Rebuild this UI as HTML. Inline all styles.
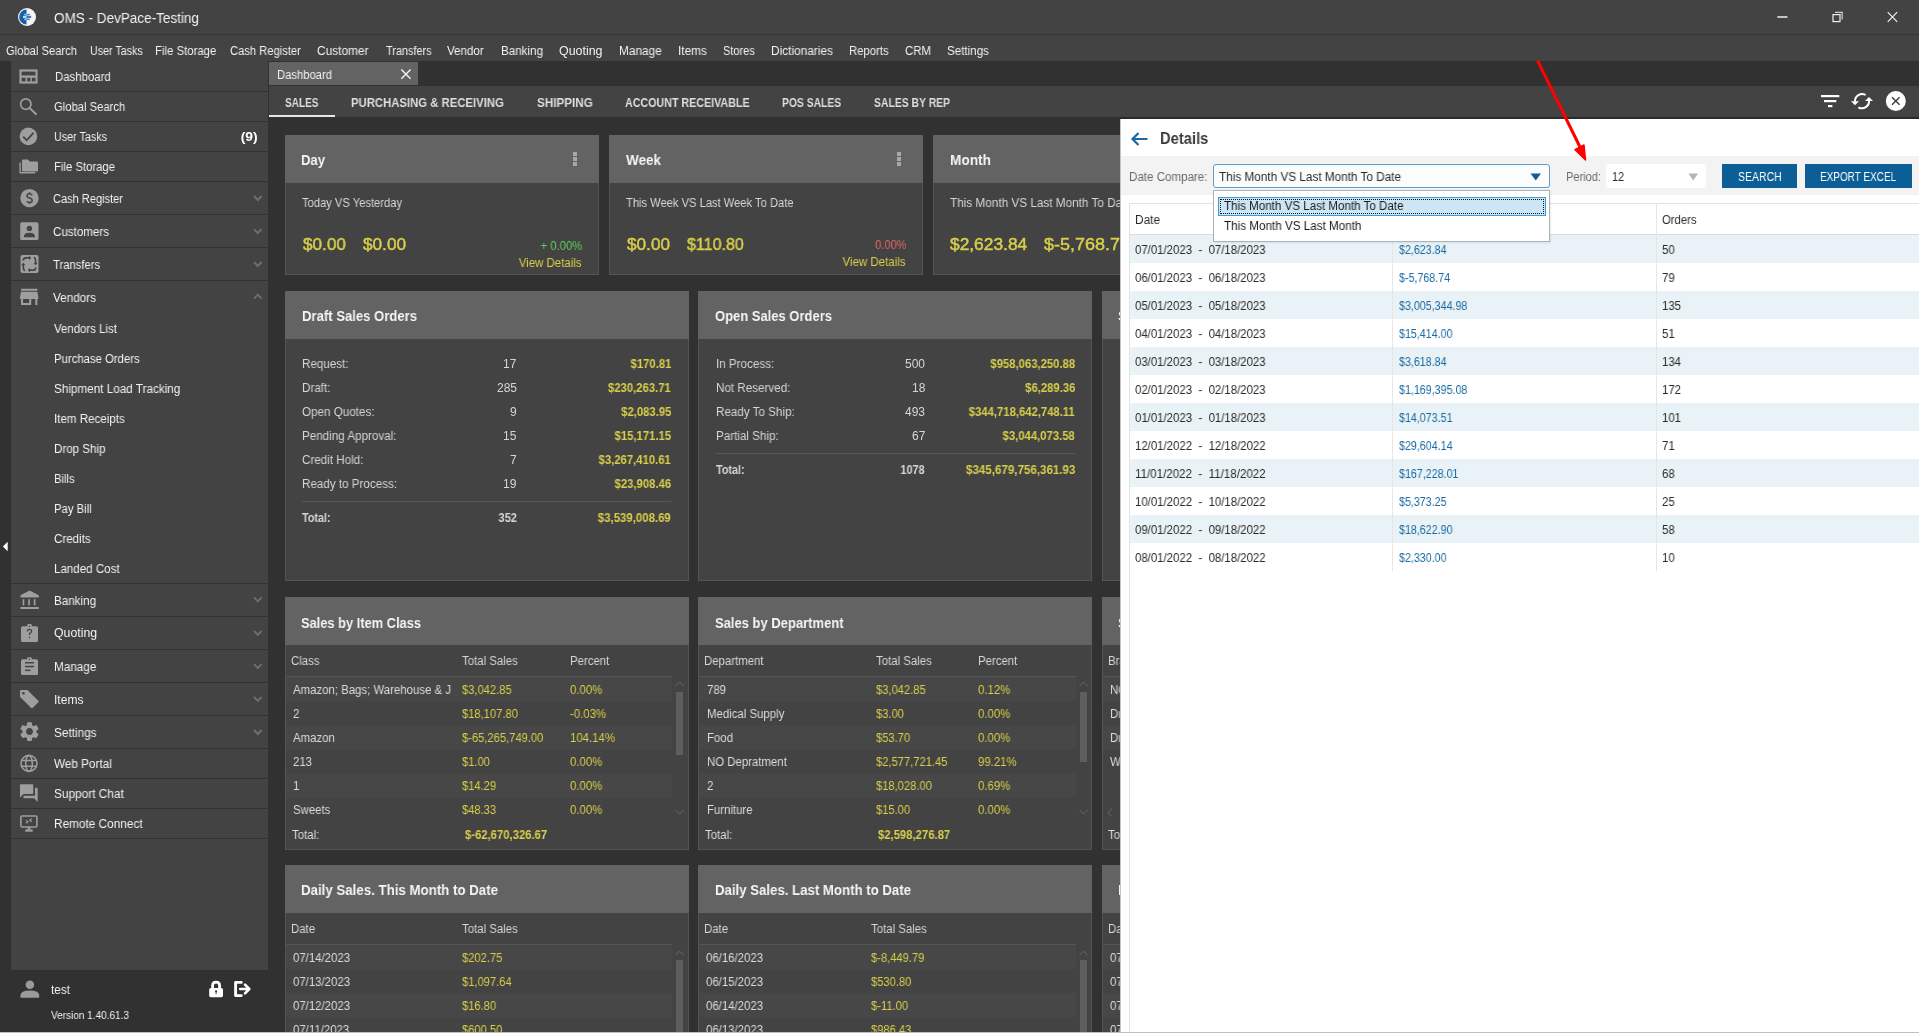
<!DOCTYPE html>
<html><head><meta charset="utf-8"><title>OMS - DevPace-Testing</title>
<style>
html,body{margin:0;padding:0;width:1919px;height:1033px;overflow:hidden;background:#313131;}
body{position:relative;font-family:'Liberation Sans', sans-serif;}
div,span,svg{position:absolute;}
.t{white-space:pre;line-height:20px;will-change:transform;}
</style></head><body>
<div style="left:0px;top:0px;width:1919px;height:34px;background:#434343;"></div>
<div style="left:0px;top:34px;width:1919px;height:1px;background:#363636;"></div>
<div style="left:0px;top:35px;width:1919px;height:26px;background:#434343;"></div>
<span class="t" style="left:54.00px;top:8.15px;font-size:14px;color:#f2f2f2;transform:scaleX(0.9656);transform-origin:left center;">OMS - DevPace-Testing</span>
<span class="t" style="left:6.30px;top:40.84px;font-size:12px;color:#f2f2f2;transform:scaleX(0.9349);transform-origin:left center;">Global Search</span>
<span class="t" style="left:90.20px;top:40.84px;font-size:12px;color:#f2f2f2;transform:scaleX(0.8894);transform-origin:left center;">User Tasks</span>
<span class="t" style="left:155.00px;top:40.84px;font-size:12px;color:#f2f2f2;transform:scaleX(0.9474);transform-origin:left center;">File Storage</span>
<span class="t" style="left:230.30px;top:40.84px;font-size:12px;color:#f2f2f2;transform:scaleX(0.9325);transform-origin:left center;">Cash Register</span>
<span class="t" style="left:317.40px;top:40.84px;font-size:12px;color:#f2f2f2;transform:scaleX(0.9901);transform-origin:left center;">Customer</span>
<span class="t" style="left:385.60px;top:40.84px;font-size:12px;color:#f2f2f2;transform:scaleX(0.9077);transform-origin:left center;">Transfers</span>
<span class="t" style="left:447.10px;top:40.84px;font-size:12px;color:#f2f2f2;transform:scaleX(0.9646);transform-origin:left center;">Vendor</span>
<span class="t" style="left:500.50px;top:40.84px;font-size:12px;color:#f2f2f2;transform:scaleX(0.9683);transform-origin:left center;">Banking</span>
<span class="t" style="left:558.90px;top:40.84px;font-size:12px;color:#f2f2f2;transform:scaleX(1.0349);transform-origin:left center;">Quoting</span>
<span class="t" style="left:619.30px;top:40.84px;font-size:12px;color:#f2f2f2;transform:scaleX(0.9844);transform-origin:left center;">Manage</span>
<span class="t" style="left:678.20px;top:40.84px;font-size:12px;color:#f2f2f2;transform:scaleX(0.9849);transform-origin:left center;">Items</span>
<span class="t" style="left:723.00px;top:40.84px;font-size:12px;color:#f2f2f2;transform:scaleX(0.9168);transform-origin:left center;">Stores</span>
<span class="t" style="left:771.00px;top:40.84px;font-size:12px;color:#f2f2f2;transform:scaleX(0.9888);transform-origin:left center;">Dictionaries</span>
<span class="t" style="left:849.10px;top:40.84px;font-size:12px;color:#f2f2f2;transform:scaleX(0.9422);transform-origin:left center;">Reports</span>
<span class="t" style="left:905.20px;top:40.84px;font-size:12px;color:#f2f2f2;transform:scaleX(0.9514);transform-origin:left center;">CRM</span>
<span class="t" style="left:947.10px;top:40.84px;font-size:12px;color:#f2f2f2;transform:scaleX(0.9663);transform-origin:left center;">Settings</span>
<div style="left:0px;top:61px;width:11px;height:972px;background:#313131;"></div>
<div style="left:11px;top:61px;width:257px;height:909px;background:#434343;"></div>
<div style="left:11px;top:91px;width:257px;height:1px;background:#313131;"></div>
<div style="left:11px;top:121px;width:257px;height:1px;background:#313131;"></div>
<div style="left:11px;top:151px;width:257px;height:1px;background:#313131;"></div>
<div style="left:11px;top:181px;width:257px;height:1px;background:#313131;"></div>
<div style="left:11px;top:214px;width:257px;height:1px;background:#313131;"></div>
<div style="left:11px;top:247px;width:257px;height:1px;background:#313131;"></div>
<div style="left:11px;top:280px;width:257px;height:1px;background:#313131;"></div>
<div style="left:11px;top:583px;width:257px;height:1px;background:#313131;"></div>
<div style="left:11px;top:616px;width:257px;height:1px;background:#313131;"></div>
<div style="left:11px;top:649px;width:257px;height:1px;background:#313131;"></div>
<div style="left:11px;top:682px;width:257px;height:1px;background:#313131;"></div>
<div style="left:11px;top:715px;width:257px;height:1px;background:#313131;"></div>
<div style="left:11px;top:748px;width:257px;height:1px;background:#313131;"></div>
<div style="left:11px;top:778px;width:257px;height:1px;background:#313131;"></div>
<div style="left:11px;top:808px;width:257px;height:1px;background:#313131;"></div>
<div style="left:11px;top:838px;width:257px;height:1px;background:#313131;"></div>
<span class="t" style="left:54.60px;top:66.84px;font-size:12px;color:#f2f2f2;transform:scaleX(0.9503);transform-origin:left center;">Dashboard</span>
<span class="t" style="left:54.10px;top:97.44px;font-size:12px;color:#f2f2f2;transform:scaleX(0.9376);transform-origin:left center;">Global Search</span>
<span class="t" style="left:54.10px;top:126.94px;font-size:12px;color:#f2f2f2;transform:scaleX(0.8945);transform-origin:left center;">User Tasks</span>
<span class="t" style="left:54.10px;top:157.14px;font-size:12px;color:#f2f2f2;transform:scaleX(0.9428);transform-origin:left center;">File Storage</span>
<span class="t" style="left:52.90px;top:188.84px;font-size:12px;color:#f2f2f2;transform:scaleX(0.9207);transform-origin:left center;">Cash Register</span>
<span class="t" style="left:52.90px;top:222.14px;font-size:12px;color:#f2f2f2;transform:scaleX(0.9670);transform-origin:left center;">Customers</span>
<span class="t" style="left:52.90px;top:255.34px;font-size:12px;color:#f2f2f2;transform:scaleX(0.9376);transform-origin:left center;">Transfers</span>
<span class="t" style="left:52.90px;top:288.04px;font-size:12px;color:#f2f2f2;transform:scaleX(0.9785);transform-origin:left center;">Vendors</span>
<span class="t" style="left:242.73px;top:126.94px;font-size:12px;color:#ffffff;font-weight:700;transform:scaleX(1.1587);transform-origin:right center;">(9)</span>
<span class="t" style="left:54.20px;top:319.44px;font-size:12px;color:#f2f2f2;transform:scaleX(0.9524);transform-origin:left center;">Vendors List</span>
<span class="t" style="left:54.20px;top:349.24px;font-size:12px;color:#f2f2f2;transform:scaleX(0.9448);transform-origin:left center;">Purchase Orders</span>
<span class="t" style="left:54.20px;top:379.04px;font-size:12px;color:#f2f2f2;transform:scaleX(0.9759);transform-origin:left center;">Shipment Load Tracking</span>
<span class="t" style="left:54.20px;top:408.84px;font-size:12px;color:#f2f2f2;transform:scaleX(0.9651);transform-origin:left center;">Item Receipts</span>
<span class="t" style="left:54.20px;top:438.84px;font-size:12px;color:#f2f2f2;transform:scaleX(0.9649);transform-origin:left center;">Drop Ship</span>
<span class="t" style="left:54.20px;top:468.84px;font-size:12px;color:#f2f2f2;transform:scaleX(0.9357);transform-origin:left center;">Bills</span>
<span class="t" style="left:54.20px;top:498.84px;font-size:12px;color:#f2f2f2;transform:scaleX(0.9421);transform-origin:left center;">Pay Bill</span>
<span class="t" style="left:54.20px;top:528.84px;font-size:12px;color:#f2f2f2;transform:scaleX(0.9628);transform-origin:left center;">Credits</span>
<span class="t" style="left:54.20px;top:558.84px;font-size:12px;color:#f2f2f2;transform:scaleX(0.9638);transform-origin:left center;">Landed Cost</span>
<span class="t" style="left:53.60px;top:590.64px;font-size:12px;color:#f2f2f2;transform:scaleX(0.9706);transform-origin:left center;">Banking</span>
<span class="t" style="left:53.60px;top:623.34px;font-size:12px;color:#f2f2f2;transform:scaleX(1.0254);transform-origin:left center;">Quoting</span>
<span class="t" style="left:53.60px;top:656.84px;font-size:12px;color:#f2f2f2;transform:scaleX(0.9775);transform-origin:left center;">Manage</span>
<span class="t" style="left:53.60px;top:689.54px;font-size:12px;color:#f2f2f2;transform:scaleX(1.0053);transform-origin:left center;">Items</span>
<span class="t" style="left:53.60px;top:722.74px;font-size:12px;color:#f2f2f2;transform:scaleX(0.9825);transform-origin:left center;">Settings</span>
<span class="t" style="left:54.10px;top:754.04px;font-size:12px;color:#f2f2f2;transform:scaleX(0.9773);transform-origin:left center;">Web Portal</span>
<span class="t" style="left:54.10px;top:784.14px;font-size:12px;color:#f2f2f2;transform:scaleX(0.9870);transform-origin:left center;">Support Chat</span>
<span class="t" style="left:54.10px;top:814.24px;font-size:12px;color:#f2f2f2;transform:scaleX(0.9839);transform-origin:left center;">Remote Connect</span>
<span class="t" style="left:51.00px;top:979.84px;font-size:12px;color:#f2f2f2;transform:scaleX(0.9822);transform-origin:left center;">test</span>
<span class="t" style="left:51.00px;top:1005.19px;font-size:11px;color:#f2f2f2;transform:scaleX(0.9109);transform-origin:left center;">Version 1.40.61.3</span>
<div style="left:268px;top:61px;width:1651px;height:25px;background:#313131;"></div>
<div style="left:269px;top:62px;width:149px;height:23px;background:#636363;"></div>
<span class="t" style="left:277.40px;top:64.84px;font-size:12px;color:#f2f2f2;transform:scaleX(0.9367);transform-origin:left center;">Dashboard</span>
<div style="left:269px;top:86px;width:1650px;height:31px;background:#434343;"></div>
<div style="left:269px;top:115px;width:66px;height:2px;background:#e6e6e6;"></div>
<span class="t" style="left:285.00px;top:93.14px;font-size:12px;color:#dedede;font-weight:700;transform:scaleX(0.8347);transform-origin:left center;">SALES</span>
<span class="t" style="left:351.20px;top:93.14px;font-size:12px;color:#dedede;font-weight:700;transform:scaleX(0.9430);transform-origin:left center;">PURCHASING &amp; RECEIVING</span>
<span class="t" style="left:536.70px;top:93.14px;font-size:12px;color:#dedede;font-weight:700;transform:scaleX(0.9728);transform-origin:left center;">SHIPPING</span>
<span class="t" style="left:625.00px;top:93.14px;font-size:12px;color:#dedede;font-weight:700;transform:scaleX(0.8914);transform-origin:left center;">ACCOUNT RECEIVABLE</span>
<span class="t" style="left:782.20px;top:93.14px;font-size:12px;color:#dedede;font-weight:700;transform:scaleX(0.8604);transform-origin:left center;">POS SALES</span>
<span class="t" style="left:873.90px;top:93.14px;font-size:12px;color:#dedede;font-weight:700;transform:scaleX(0.8666);transform-origin:left center;">SALES BY REP</span>
<div style="left:285px;top:135px;width:314px;height:48px;background:#636363;"></div>
<div style="left:285px;top:183px;width:314px;height:92px;background:#434343;box-shadow:inset 1px 0 0 #545454,inset -1px 0 0 #545454,inset 0 -1px 0 #545454;"></div>
<div style="left:609px;top:135px;width:314px;height:48px;background:#636363;"></div>
<div style="left:609px;top:183px;width:314px;height:92px;background:#434343;box-shadow:inset 1px 0 0 #545454,inset -1px 0 0 #545454,inset 0 -1px 0 #545454;"></div>
<div style="left:933px;top:135px;width:314px;height:48px;background:#636363;"></div>
<div style="left:933px;top:183px;width:314px;height:92px;background:#434343;box-shadow:inset 1px 0 0 #545454,inset -1px 0 0 #545454,inset 0 -1px 0 #545454;"></div>
<div style="left:573px;top:152px;width:4px;height:4px;background:#a8a8a8;"></div>
<div style="left:573px;top:157px;width:4px;height:4px;background:#a8a8a8;"></div>
<div style="left:573px;top:162px;width:4px;height:4px;background:#a8a8a8;"></div>
<div style="left:897px;top:152px;width:4px;height:4px;background:#a8a8a8;"></div>
<div style="left:897px;top:157px;width:4px;height:4px;background:#a8a8a8;"></div>
<div style="left:897px;top:162px;width:4px;height:4px;background:#a8a8a8;"></div>
<span class="t" style="left:301.40px;top:150.30px;font-size:15px;color:#f5f5f5;font-weight:700;transform:scaleX(0.8717);transform-origin:left center;">Day</span>
<span class="t" style="left:625.50px;top:150.30px;font-size:15px;color:#f5f5f5;font-weight:700;transform:scaleX(0.8992);transform-origin:left center;">Week</span>
<span class="t" style="left:949.60px;top:150.30px;font-size:15px;color:#f5f5f5;font-weight:700;transform:scaleX(0.9114);transform-origin:left center;">Month</span>
<span class="t" style="left:302.00px;top:192.67px;font-size:12.5px;color:#d6d6d6;transform:scaleX(0.8937);transform-origin:left center;">Today VS Yesterday</span>
<span class="t" style="left:626.00px;top:192.67px;font-size:12.5px;color:#d6d6d6;transform:scaleX(0.8929);transform-origin:left center;">This Week VS Last Week To Date</span>
<span class="t" style="left:950.00px;top:192.67px;font-size:12.5px;color:#d6d6d6;transform:scaleX(0.9400);transform-origin:left center;">This Month VS Last Month To Date</span>
<span class="t" style="left:302.80px;top:234.34px;font-size:17.2px;color:#d8cf4a;-webkit-text-stroke:0.45px #d8cf4a;transform:scaleX(0.9950);transform-origin:left center;">$0.00</span>
<span class="t" style="left:362.50px;top:234.34px;font-size:17.2px;color:#d8cf4a;-webkit-text-stroke:0.45px #d8cf4a;">$0.00</span>
<span class="t" style="left:626.70px;top:234.04px;font-size:17.2px;color:#d8cf4a;-webkit-text-stroke:0.45px #d8cf4a;transform:scaleX(0.9973);transform-origin:left center;">$0.00</span>
<span class="t" style="left:686.80px;top:234.04px;font-size:17.2px;color:#d8cf4a;-webkit-text-stroke:0.45px #d8cf4a;transform:scaleX(0.9333);transform-origin:left center;">$110.80</span>
<span class="t" style="left:950.30px;top:234.04px;font-size:17.2px;color:#d8cf4a;-webkit-text-stroke:0.45px #d8cf4a;transform:scaleX(1.0096);transform-origin:left center;">$2,623.84</span>
<span class="t" style="left:1044.30px;top:234.04px;font-size:17.2px;color:#d8cf4a;-webkit-text-stroke:0.45px #d8cf4a;transform:scaleX(1.0464);transform-origin:left center;">$-5,768.74</span>
<span class="t" style="left:535.78px;top:235.67px;font-size:12.5px;color:#5ccf5c;transform:scaleX(0.9001);transform-origin:right center;">+ 0.00%</span>
<span class="t" style="left:870.55px;top:235.17px;font-size:12.5px;color:#e06666;transform:scaleX(0.8829);transform-origin:right center;">0.00%</span>
<span class="t" style="left:513.44px;top:252.67px;font-size:12.5px;color:#d8cf4a;transform:scaleX(0.9160);transform-origin:right center;">View Details</span>
<span class="t" style="left:837.44px;top:252.17px;font-size:12.5px;color:#d8cf4a;transform:scaleX(0.9189);transform-origin:right center;">View Details</span>
<div style="left:285px;top:291px;width:404px;height:48px;background:#636363;"></div>
<div style="left:285px;top:339px;width:404px;height:242px;background:#434343;box-shadow:inset 1px 0 0 #545454,inset -1px 0 0 #545454,inset 0 -1px 0 #545454;"></div>
<div style="left:698px;top:291px;width:394px;height:48px;background:#636363;"></div>
<div style="left:698px;top:339px;width:394px;height:242px;background:#434343;box-shadow:inset 1px 0 0 #545454,inset -1px 0 0 #545454,inset 0 -1px 0 #545454;"></div>
<div style="left:1102px;top:291px;width:400px;height:48px;background:#636363;"></div>
<div style="left:1102px;top:339px;width:400px;height:242px;background:#434343;box-shadow:inset 1px 0 0 #545454,inset -1px 0 0 #545454,inset 0 -1px 0 #545454;"></div>
<span class="t" style="left:301.50px;top:306.20px;font-size:15px;color:#f5f5f5;font-weight:700;transform:scaleX(0.8730);transform-origin:left center;">Draft Sales Orders</span>
<span class="t" style="left:714.50px;top:306.20px;font-size:15px;color:#f5f5f5;font-weight:700;transform:scaleX(0.8663);transform-origin:left center;">Open Sales Orders</span>
<span class="t" style="left:1118.00px;top:306.20px;font-size:15px;color:#f5f5f5;font-weight:700;transform:scaleX(0.9500);transform-origin:left center;">S</span>
<span class="t" style="left:302.00px;top:354.34px;font-size:12px;color:#d6d6d6;transform:scaleX(0.9700);transform-origin:left center;">Request:</span>
<span class="t" style="left:503.24px;top:354.34px;font-size:12px;color:#d6d6d6;">17</span>
<span class="t" style="left:627.61px;top:354.34px;font-size:12px;color:#d8cf4a;font-weight:700;transform:scaleX(0.9400);transform-origin:right center;">$170.81</span>
<span class="t" style="left:302.00px;top:378.34px;font-size:12px;color:#d6d6d6;transform:scaleX(0.9700);transform-origin:left center;">Draft:</span>
<span class="t" style="left:496.57px;top:378.34px;font-size:12px;color:#d6d6d6;">285</span>
<span class="t" style="left:604.27px;top:378.34px;font-size:12px;color:#d8cf4a;font-weight:700;transform:scaleX(0.9400);transform-origin:right center;">$230,263.71</span>
<span class="t" style="left:302.00px;top:402.34px;font-size:12px;color:#d6d6d6;transform:scaleX(0.9700);transform-origin:left center;">Open Quotes:</span>
<span class="t" style="left:509.91px;top:402.34px;font-size:12px;color:#d6d6d6;">9</span>
<span class="t" style="left:617.61px;top:402.34px;font-size:12px;color:#d8cf4a;font-weight:700;transform:scaleX(0.9400);transform-origin:right center;">$2,083.95</span>
<span class="t" style="left:302.00px;top:426.34px;font-size:12px;color:#d6d6d6;transform:scaleX(0.9700);transform-origin:left center;">Pending Approval:</span>
<span class="t" style="left:503.24px;top:426.34px;font-size:12px;color:#d6d6d6;">15</span>
<span class="t" style="left:610.94px;top:426.34px;font-size:12px;color:#d8cf4a;font-weight:700;transform:scaleX(0.9400);transform-origin:right center;">$15,171.15</span>
<span class="t" style="left:302.00px;top:450.34px;font-size:12px;color:#d6d6d6;transform:scaleX(0.9700);transform-origin:left center;">Credit Hold:</span>
<span class="t" style="left:509.91px;top:450.34px;font-size:12px;color:#d6d6d6;">7</span>
<span class="t" style="left:594.25px;top:450.34px;font-size:12px;color:#d8cf4a;font-weight:700;transform:scaleX(0.9400);transform-origin:right center;">$3,267,410.61</span>
<span class="t" style="left:302.00px;top:474.34px;font-size:12px;color:#d6d6d6;transform:scaleX(0.9700);transform-origin:left center;">Ready to Process:</span>
<span class="t" style="left:503.24px;top:474.34px;font-size:12px;color:#d6d6d6;">19</span>
<span class="t" style="left:610.94px;top:474.34px;font-size:12px;color:#d8cf4a;font-weight:700;transform:scaleX(0.9400);transform-origin:right center;">$23,908.46</span>
<div style="left:302px;top:501px;width:369px;height:1px;background:#575757;"></div>
<span class="t" style="left:302.00px;top:508.24px;font-size:12px;color:#d6d6d6;font-weight:700;transform:scaleX(0.9000);transform-origin:left center;">Total:</span>
<span class="t" style="left:496.57px;top:508.24px;font-size:12px;color:#d6d6d6;font-weight:700;transform:scaleX(0.9300);transform-origin:right center;">352</span>
<span class="t" style="left:594.25px;top:508.24px;font-size:12px;color:#d8cf4a;font-weight:700;transform:scaleX(0.9500);transform-origin:right center;">$3,539,008.69</span>
<span class="t" style="left:715.50px;top:354.34px;font-size:12px;color:#d6d6d6;transform:scaleX(0.9700);transform-origin:left center;">In Process:</span>
<span class="t" style="left:904.97px;top:354.34px;font-size:12px;color:#d6d6d6;">500</span>
<span class="t" style="left:984.91px;top:354.34px;font-size:12px;color:#d8cf4a;font-weight:700;transform:scaleX(0.9400);transform-origin:right center;">$958,063,250.88</span>
<span class="t" style="left:715.50px;top:378.34px;font-size:12px;color:#d6d6d6;transform:scaleX(0.9700);transform-origin:left center;">Not Reserved:</span>
<span class="t" style="left:911.64px;top:378.34px;font-size:12px;color:#d6d6d6;">18</span>
<span class="t" style="left:1021.61px;top:378.34px;font-size:12px;color:#d8cf4a;font-weight:700;transform:scaleX(0.9400);transform-origin:right center;">$6,289.36</span>
<span class="t" style="left:715.50px;top:402.34px;font-size:12px;color:#d6d6d6;transform:scaleX(0.9700);transform-origin:left center;">Ready To Ship:</span>
<span class="t" style="left:904.97px;top:402.34px;font-size:12px;color:#d6d6d6;">493</span>
<span class="t" style="left:962.22px;top:402.34px;font-size:12px;color:#d8cf4a;font-weight:700;transform:scaleX(0.9400);transform-origin:right center;">$344,718,642,748.11</span>
<span class="t" style="left:715.50px;top:426.34px;font-size:12px;color:#d6d6d6;transform:scaleX(0.9700);transform-origin:left center;">Partial Ship:</span>
<span class="t" style="left:911.64px;top:426.34px;font-size:12px;color:#d6d6d6;">67</span>
<span class="t" style="left:998.25px;top:426.34px;font-size:12px;color:#d8cf4a;font-weight:700;transform:scaleX(0.9400);transform-origin:right center;">$3,044,073.58</span>
<div style="left:715px;top:453px;width:360px;height:1px;background:#575757;"></div>
<span class="t" style="left:715.50px;top:460.34px;font-size:12px;color:#d6d6d6;font-weight:700;transform:scaleX(0.9000);transform-origin:left center;">Total:</span>
<span class="t" style="left:898.30px;top:460.34px;font-size:12px;color:#d6d6d6;font-weight:700;transform:scaleX(0.9100);transform-origin:right center;">1078</span>
<span class="t" style="left:961.55px;top:460.34px;font-size:12px;color:#d8cf4a;font-weight:700;transform:scaleX(0.9650);transform-origin:right center;">$345,679,756,361.93</span>
<div style="left:285px;top:597px;width:404px;height:48px;background:#636363;"></div>
<div style="left:285px;top:645px;width:404px;height:205px;background:#434343;box-shadow:inset 1px 0 0 #545454,inset -1px 0 0 #545454,inset 0 -1px 0 #545454;"></div>
<div style="left:698px;top:597px;width:394px;height:48px;background:#636363;"></div>
<div style="left:698px;top:645px;width:394px;height:205px;background:#434343;box-shadow:inset 1px 0 0 #545454,inset -1px 0 0 #545454,inset 0 -1px 0 #545454;"></div>
<div style="left:1102px;top:597px;width:400px;height:48px;background:#636363;"></div>
<div style="left:1102px;top:645px;width:400px;height:205px;background:#434343;box-shadow:inset 1px 0 0 #545454,inset -1px 0 0 #545454,inset 0 -1px 0 #545454;"></div>
<span class="t" style="left:301.00px;top:612.80px;font-size:15px;color:#f5f5f5;font-weight:700;transform:scaleX(0.8567);transform-origin:left center;">Sales by Item Class</span>
<span class="t" style="left:714.50px;top:612.80px;font-size:15px;color:#f5f5f5;font-weight:700;transform:scaleX(0.8660);transform-origin:left center;">Sales by Department</span>
<span class="t" style="left:1118.00px;top:612.80px;font-size:15px;color:#f5f5f5;font-weight:700;transform:scaleX(0.9500);transform-origin:left center;">S</span>
<span class="t" style="left:291.00px;top:651.34px;font-size:12px;color:#d6d6d6;transform:scaleX(0.9500);transform-origin:left center;">Class</span>
<span class="t" style="left:462.00px;top:651.34px;font-size:12px;color:#d6d6d6;transform:scaleX(0.9500);transform-origin:left center;">Total Sales</span>
<span class="t" style="left:570.00px;top:651.34px;font-size:12px;color:#d6d6d6;transform:scaleX(0.9500);transform-origin:left center;">Percent</span>
<div style="left:286px;top:676px;width:386px;height:1px;background:#555555;"></div>
<div style="left:286px;top:677px;width:386px;height:24px;background:#474747;"></div>
<div style="left:293px;top:654.5px;width:162px;height:60px;overflow:hidden"><span class="t" style="left:0;top:25.84px;font-size:12px;color:#dcdcdc;transform:scaleX(0.9500);transform-origin:left center;">Amazon; Bags; Warehouse &amp; J</span></div>
<span class="t" style="left:462.00px;top:680.34px;font-size:12px;color:#d8cf4a;transform:scaleX(0.9300);transform-origin:left center;">$3,042.85</span>
<span class="t" style="left:570.00px;top:680.34px;font-size:12px;color:#d8cf4a;transform:scaleX(0.9500);transform-origin:left center;">0.00%</span>
<div style="left:293px;top:678.5px;width:162px;height:60px;overflow:hidden"><span class="t" style="left:0;top:25.84px;font-size:12px;color:#dcdcdc;transform:scaleX(0.9500);transform-origin:left center;">2</span></div>
<span class="t" style="left:462.00px;top:704.34px;font-size:12px;color:#d8cf4a;transform:scaleX(0.9300);transform-origin:left center;">$18,107.80</span>
<span class="t" style="left:570.00px;top:704.34px;font-size:12px;color:#d8cf4a;transform:scaleX(0.9500);transform-origin:left center;">-0.03%</span>
<div style="left:286px;top:725px;width:386px;height:24px;background:#474747;"></div>
<div style="left:293px;top:702.5px;width:162px;height:60px;overflow:hidden"><span class="t" style="left:0;top:25.84px;font-size:12px;color:#dcdcdc;transform:scaleX(0.9500);transform-origin:left center;">Amazon</span></div>
<span class="t" style="left:462.00px;top:728.34px;font-size:12px;color:#d8cf4a;transform:scaleX(0.9300);transform-origin:left center;">$-65,265,749.00</span>
<span class="t" style="left:570.00px;top:728.34px;font-size:12px;color:#d8cf4a;transform:scaleX(0.9500);transform-origin:left center;">104.14%</span>
<div style="left:293px;top:726.5px;width:162px;height:60px;overflow:hidden"><span class="t" style="left:0;top:25.84px;font-size:12px;color:#dcdcdc;transform:scaleX(0.9500);transform-origin:left center;">213</span></div>
<span class="t" style="left:462.00px;top:752.34px;font-size:12px;color:#d8cf4a;transform:scaleX(0.9300);transform-origin:left center;">$1.00</span>
<span class="t" style="left:570.00px;top:752.34px;font-size:12px;color:#d8cf4a;transform:scaleX(0.9500);transform-origin:left center;">0.00%</span>
<div style="left:286px;top:773px;width:386px;height:24px;background:#474747;"></div>
<div style="left:293px;top:750.5px;width:162px;height:60px;overflow:hidden"><span class="t" style="left:0;top:25.84px;font-size:12px;color:#dcdcdc;transform:scaleX(0.9500);transform-origin:left center;">1</span></div>
<span class="t" style="left:462.00px;top:776.34px;font-size:12px;color:#d8cf4a;transform:scaleX(0.9300);transform-origin:left center;">$14.29</span>
<span class="t" style="left:570.00px;top:776.34px;font-size:12px;color:#d8cf4a;transform:scaleX(0.9500);transform-origin:left center;">0.00%</span>
<div style="left:293px;top:774.5px;width:162px;height:60px;overflow:hidden"><span class="t" style="left:0;top:25.84px;font-size:12px;color:#dcdcdc;transform:scaleX(0.9500);transform-origin:left center;">Sweets</span></div>
<span class="t" style="left:462.00px;top:800.34px;font-size:12px;color:#d8cf4a;transform:scaleX(0.9300);transform-origin:left center;">$48.33</span>
<span class="t" style="left:570.00px;top:800.34px;font-size:12px;color:#d8cf4a;transform:scaleX(0.9500);transform-origin:left center;">0.00%</span>
<span class="t" style="left:292.00px;top:824.84px;font-size:12px;color:#dcdcdc;transform:scaleX(0.9500);transform-origin:left center;">Total:</span>
<span class="t" style="left:464.70px;top:824.84px;font-size:12px;color:#d8cf4a;font-weight:700;transform:scaleX(0.9400);transform-origin:left center;">$-62,670,326.67</span>
<svg style="left:674px;top:680px" width="11" height="8" viewBox="0 0 11 8"><path d="M1.5 6 L5.5 2 L9.5 6" fill="none" stroke="#5a5a5a" stroke-width="1.2"/></svg>
<div style="left:676px;top:692px;width:7px;height:63px;background:#5e5e5e;"></div>
<svg style="left:674px;top:808px" width="11" height="8" viewBox="0 0 11 8"><path d="M1.5 2 L5.5 6 L9.5 2" fill="none" stroke="#5a5a5a" stroke-width="1.2"/></svg>
<span class="t" style="left:704.40px;top:651.34px;font-size:12px;color:#d6d6d6;transform:scaleX(0.9500);transform-origin:left center;">Department</span>
<span class="t" style="left:875.60px;top:651.34px;font-size:12px;color:#d6d6d6;transform:scaleX(0.9500);transform-origin:left center;">Total Sales</span>
<span class="t" style="left:978.00px;top:651.34px;font-size:12px;color:#d6d6d6;transform:scaleX(0.9500);transform-origin:left center;">Percent</span>
<div style="left:699px;top:676px;width:377px;height:1px;background:#555555;"></div>
<div style="left:699px;top:677px;width:377px;height:24px;background:#474747;"></div>
<span class="t" style="left:706.50px;top:680.34px;font-size:12px;color:#dcdcdc;transform:scaleX(0.9500);transform-origin:left center;">789</span>
<span class="t" style="left:875.60px;top:680.34px;font-size:12px;color:#d8cf4a;transform:scaleX(0.9300);transform-origin:left center;">$3,042.85</span>
<span class="t" style="left:978.00px;top:680.34px;font-size:12px;color:#d8cf4a;transform:scaleX(0.9500);transform-origin:left center;">0.12%</span>
<span class="t" style="left:706.50px;top:704.34px;font-size:12px;color:#dcdcdc;transform:scaleX(0.9500);transform-origin:left center;">Medical Supply</span>
<span class="t" style="left:875.60px;top:704.34px;font-size:12px;color:#d8cf4a;transform:scaleX(0.9300);transform-origin:left center;">$3.00</span>
<span class="t" style="left:978.00px;top:704.34px;font-size:12px;color:#d8cf4a;transform:scaleX(0.9500);transform-origin:left center;">0.00%</span>
<div style="left:699px;top:725px;width:377px;height:24px;background:#474747;"></div>
<span class="t" style="left:706.50px;top:728.34px;font-size:12px;color:#dcdcdc;transform:scaleX(0.9500);transform-origin:left center;">Food</span>
<span class="t" style="left:875.60px;top:728.34px;font-size:12px;color:#d8cf4a;transform:scaleX(0.9300);transform-origin:left center;">$53.70</span>
<span class="t" style="left:978.00px;top:728.34px;font-size:12px;color:#d8cf4a;transform:scaleX(0.9500);transform-origin:left center;">0.00%</span>
<span class="t" style="left:706.50px;top:752.34px;font-size:12px;color:#dcdcdc;transform:scaleX(0.9500);transform-origin:left center;">NO Depratment</span>
<span class="t" style="left:875.60px;top:752.34px;font-size:12px;color:#d8cf4a;transform:scaleX(0.9300);transform-origin:left center;">$2,577,721.45</span>
<span class="t" style="left:978.00px;top:752.34px;font-size:12px;color:#d8cf4a;transform:scaleX(0.9500);transform-origin:left center;">99.21%</span>
<div style="left:699px;top:773px;width:377px;height:24px;background:#474747;"></div>
<span class="t" style="left:706.50px;top:776.34px;font-size:12px;color:#dcdcdc;transform:scaleX(0.9500);transform-origin:left center;">2</span>
<span class="t" style="left:875.60px;top:776.34px;font-size:12px;color:#d8cf4a;transform:scaleX(0.9300);transform-origin:left center;">$18,028.00</span>
<span class="t" style="left:978.00px;top:776.34px;font-size:12px;color:#d8cf4a;transform:scaleX(0.9500);transform-origin:left center;">0.69%</span>
<span class="t" style="left:706.50px;top:800.34px;font-size:12px;color:#dcdcdc;transform:scaleX(0.9500);transform-origin:left center;">Furniture</span>
<span class="t" style="left:875.60px;top:800.34px;font-size:12px;color:#d8cf4a;transform:scaleX(0.9300);transform-origin:left center;">$15.00</span>
<span class="t" style="left:978.00px;top:800.34px;font-size:12px;color:#d8cf4a;transform:scaleX(0.9500);transform-origin:left center;">0.00%</span>
<span class="t" style="left:705.00px;top:824.84px;font-size:12px;color:#dcdcdc;transform:scaleX(0.9500);transform-origin:left center;">Total:</span>
<span class="t" style="left:877.70px;top:824.84px;font-size:12px;color:#d8cf4a;font-weight:700;transform:scaleX(0.9400);transform-origin:left center;">$2,598,276.87</span>
<svg style="left:1078px;top:680px" width="11" height="8" viewBox="0 0 11 8"><path d="M1.5 6 L5.5 2 L9.5 6" fill="none" stroke="#5a5a5a" stroke-width="1.2"/></svg>
<div style="left:1080px;top:692px;width:7px;height:70px;background:#5e5e5e;"></div>
<svg style="left:1078px;top:808px" width="11" height="8" viewBox="0 0 11 8"><path d="M1.5 2 L5.5 6 L9.5 2" fill="none" stroke="#5a5a5a" stroke-width="1.2"/></svg>
<div style="left:458px;top:677px;width:4px;height:120px;background:transparent;"></div>
<span class="t" style="left:1108.00px;top:651.34px;font-size:12px;color:#d6d6d6;transform:scaleX(0.9500);transform-origin:left center;">Brand</span>
<div style="left:1103px;top:676px;width:17px;height:1px;background:#555555;"></div>
<div style="left:1103px;top:677px;width:17px;height:24px;background:#474747;"></div>
<span class="t" style="left:1110.00px;top:680.34px;font-size:12px;color:#dcdcdc;transform:scaleX(0.9500);transform-origin:left center;">NO Brand</span>
<span class="t" style="left:1110.00px;top:704.34px;font-size:12px;color:#dcdcdc;transform:scaleX(0.9500);transform-origin:left center;">Drinks</span>
<div style="left:1103px;top:725px;width:17px;height:24px;background:#474747;"></div>
<span class="t" style="left:1110.00px;top:728.34px;font-size:12px;color:#dcdcdc;transform:scaleX(0.9500);transform-origin:left center;">Drinks</span>
<span class="t" style="left:1110.00px;top:752.34px;font-size:12px;color:#dcdcdc;transform:scaleX(0.9500);transform-origin:left center;">Water</span>
<svg style="left:1106px;top:807px" width="8" height="11" viewBox="0 0 8 11"><path d="M6 1.5 L2 5.5 L6 9.5" fill="none" stroke="#5a5a5a" stroke-width="1.2"/></svg>
<span class="t" style="left:1108.00px;top:824.84px;font-size:12px;color:#dcdcdc;transform:scaleX(0.9500);transform-origin:left center;">Total:</span>
<div style="left:285px;top:865px;width:404px;height:48px;background:#636363;"></div>
<div style="left:285px;top:913px;width:404px;height:152px;background:#434343;box-shadow:inset 1px 0 0 #545454,inset -1px 0 0 #545454,inset 0 -1px 0 #545454;"></div>
<div style="left:698px;top:865px;width:394px;height:48px;background:#636363;"></div>
<div style="left:698px;top:913px;width:394px;height:152px;background:#434343;box-shadow:inset 1px 0 0 #545454,inset -1px 0 0 #545454,inset 0 -1px 0 #545454;"></div>
<div style="left:1102px;top:865px;width:400px;height:48px;background:#636363;"></div>
<div style="left:1102px;top:913px;width:400px;height:152px;background:#434343;box-shadow:inset 1px 0 0 #545454,inset -1px 0 0 #545454,inset 0 -1px 0 #545454;"></div>
<span class="t" style="left:301.40px;top:880.30px;font-size:15px;color:#f5f5f5;font-weight:700;transform:scaleX(0.8852);transform-origin:left center;">Daily Sales. This Month to Date</span>
<span class="t" style="left:715.20px;top:880.30px;font-size:15px;color:#f5f5f5;font-weight:700;transform:scaleX(0.8807);transform-origin:left center;">Daily Sales. Last Month to Date</span>
<span class="t" style="left:1118.00px;top:880.30px;font-size:15px;color:#f5f5f5;font-weight:700;transform:scaleX(0.9500);transform-origin:left center;">Daily</span>
<span class="t" style="left:1108.00px;top:918.84px;font-size:12px;color:#d6d6d6;transform:scaleX(0.9500);transform-origin:left center;">Date</span>
<div style="left:1103px;top:944px;width:17px;height:1px;background:#555555;"></div>
<div style="left:1103px;top:945px;width:17px;height:24px;background:#474747;"></div>
<span class="t" style="left:1110.00px;top:948.24px;font-size:12px;color:#dcdcdc;transform:scaleX(0.9500);transform-origin:left center;">07/14/2023</span>
<span class="t" style="left:1110.00px;top:972.24px;font-size:12px;color:#dcdcdc;transform:scaleX(0.9500);transform-origin:left center;">07/14/2023</span>
<div style="left:1103px;top:993px;width:17px;height:24px;background:#474747;"></div>
<span class="t" style="left:1110.00px;top:996.24px;font-size:12px;color:#dcdcdc;transform:scaleX(0.9500);transform-origin:left center;">07/14/2023</span>
<span class="t" style="left:1110.00px;top:1020.24px;font-size:12px;color:#dcdcdc;transform:scaleX(0.9500);transform-origin:left center;">07/14/2023</span>
<span class="t" style="left:291.30px;top:918.84px;font-size:12px;color:#d6d6d6;transform:scaleX(0.9500);transform-origin:left center;">Date</span>
<span class="t" style="left:462.20px;top:918.84px;font-size:12px;color:#d6d6d6;transform:scaleX(0.9500);transform-origin:left center;">Total Sales</span>
<div style="left:286px;top:944px;width:386px;height:1px;background:#555555;"></div>
<div style="left:286px;top:945px;width:386px;height:24px;background:#474747;"></div>
<span class="t" style="left:292.80px;top:948.24px;font-size:12px;color:#dcdcdc;transform:scaleX(0.9500);transform-origin:left center;">07/14/2023</span>
<span class="t" style="left:462.20px;top:948.24px;font-size:12px;color:#d8cf4a;transform:scaleX(0.9300);transform-origin:left center;">$202.75</span>
<span class="t" style="left:292.80px;top:972.24px;font-size:12px;color:#dcdcdc;transform:scaleX(0.9500);transform-origin:left center;">07/13/2023</span>
<span class="t" style="left:462.20px;top:972.24px;font-size:12px;color:#d8cf4a;transform:scaleX(0.9300);transform-origin:left center;">$1,097.64</span>
<div style="left:286px;top:993px;width:386px;height:24px;background:#474747;"></div>
<span class="t" style="left:292.80px;top:996.24px;font-size:12px;color:#dcdcdc;transform:scaleX(0.9500);transform-origin:left center;">07/12/2023</span>
<span class="t" style="left:462.20px;top:996.24px;font-size:12px;color:#d8cf4a;transform:scaleX(0.9300);transform-origin:left center;">$16.80</span>
<span class="t" style="left:292.80px;top:1020.24px;font-size:12px;color:#dcdcdc;transform:scaleX(0.9500);transform-origin:left center;">07/11/2023</span>
<span class="t" style="left:462.20px;top:1020.24px;font-size:12px;color:#d8cf4a;transform:scaleX(0.9300);transform-origin:left center;">$600.50</span>
<svg style="left:674px;top:949px" width="11" height="8" viewBox="0 0 11 8"><path d="M1.5 6 L5.5 2 L9.5 6" fill="none" stroke="#5a5a5a" stroke-width="1.2"/></svg>
<div style="left:676px;top:960px;width:7px;height:80px;background:#5e5e5e;"></div>
<span class="t" style="left:704.40px;top:918.84px;font-size:12px;color:#d6d6d6;transform:scaleX(0.9500);transform-origin:left center;">Date</span>
<span class="t" style="left:870.70px;top:918.84px;font-size:12px;color:#d6d6d6;transform:scaleX(0.9500);transform-origin:left center;">Total Sales</span>
<div style="left:699px;top:944px;width:377px;height:1px;background:#555555;"></div>
<div style="left:699px;top:945px;width:377px;height:24px;background:#474747;"></div>
<span class="t" style="left:705.90px;top:948.24px;font-size:12px;color:#dcdcdc;transform:scaleX(0.9500);transform-origin:left center;">06/16/2023</span>
<span class="t" style="left:870.70px;top:948.24px;font-size:12px;color:#d8cf4a;transform:scaleX(0.9300);transform-origin:left center;">$-8,449.79</span>
<span class="t" style="left:705.90px;top:972.24px;font-size:12px;color:#dcdcdc;transform:scaleX(0.9500);transform-origin:left center;">06/15/2023</span>
<span class="t" style="left:870.70px;top:972.24px;font-size:12px;color:#d8cf4a;transform:scaleX(0.9300);transform-origin:left center;">$530.80</span>
<div style="left:699px;top:993px;width:377px;height:24px;background:#474747;"></div>
<span class="t" style="left:705.90px;top:996.24px;font-size:12px;color:#dcdcdc;transform:scaleX(0.9500);transform-origin:left center;">06/14/2023</span>
<span class="t" style="left:870.70px;top:996.24px;font-size:12px;color:#d8cf4a;transform:scaleX(0.9300);transform-origin:left center;">$-11.00</span>
<span class="t" style="left:705.90px;top:1020.24px;font-size:12px;color:#dcdcdc;transform:scaleX(0.9500);transform-origin:left center;">06/13/2023</span>
<span class="t" style="left:870.70px;top:1020.24px;font-size:12px;color:#d8cf4a;transform:scaleX(0.9300);transform-origin:left center;">$986.43</span>
<svg style="left:1078px;top:949px" width="11" height="8" viewBox="0 0 11 8"><path d="M1.5 6 L5.5 2 L9.5 6" fill="none" stroke="#5a5a5a" stroke-width="1.2"/></svg>
<div style="left:1080px;top:960px;width:7px;height:80px;background:#5e5e5e;"></div>
<div style="left:1120px;top:117px;width:799px;height:2px;background:#2a2a2a;"></div>
<div style="left:1120px;top:119px;width:799px;height:913px;background:#ffffff;box-shadow:inset 1px 0 0 #c4c4c4;"></div>
<div style="left:1121px;top:156px;width:798px;height:39px;background:#f3f3f3;"></div>
<svg style="left:1130px;top:131px" width="19" height="16" viewBox="0 0 19 16"><path d="M17.5 8 H2.5 M8.5 2 L2.5 8 L8.5 14" fill="none" stroke="#1e6aa0" stroke-width="2.2"/></svg>
<span class="t" style="left:1159.60px;top:129.06px;font-size:16px;color:#3a3a3a;font-weight:700;transform:scaleX(0.9205);transform-origin:left center;">Details</span>
<span class="t" style="left:1129.40px;top:166.64px;font-size:12px;color:#6a6a6a;transform:scaleX(0.9647);transform-origin:left center;">Date Compare:</span>
<div style="left:1213px;top:164px;width:337px;height:24px;background:#fcfcfc;box-sizing:border-box;border:1px solid #5b9cc9;border-radius:3px;"></div>
<span class="t" style="left:1219.00px;top:166.64px;font-size:12px;color:#2a2a2a;transform:scaleX(0.9792);transform-origin:left center;">This Month VS Last Month To Date</span>
<svg style="left:1530px;top:173px" width="12" height="8" viewBox="0 0 12 8"><path d="M0.5 0.5 H11 L5.75 7.5 Z" fill="#0f5e96"/></svg>
<span class="t" style="left:1565.80px;top:166.64px;font-size:12px;color:#6a6a6a;transform:scaleX(0.9203);transform-origin:left center;">Period:</span>
<div style="left:1606px;top:164px;width:100px;height:24px;background:#ffffff;border-radius:3px;"></div>
<span class="t" style="left:1612.00px;top:166.64px;font-size:12px;color:#2a2a2a;transform:scaleX(0.8982);transform-origin:left center;">12</span>
<svg style="left:1688px;top:173px" width="11" height="8" viewBox="0 0 11 8"><path d="M0.5 0.5 H10 L5.25 7.5 Z" fill="#b4b4b4"/></svg>
<div style="left:1722px;top:164px;width:75px;height:24px;background:#0b5e96;"></div>
<span class="t" style="left:1738.00px;top:166.64px;font-size:12px;color:#ffffff;transform:scaleX(0.8737);transform-origin:left center;">SEARCH</span>
<div style="left:1805px;top:164px;width:107px;height:24px;background:#0b5e96;"></div>
<span class="t" style="left:1820.10px;top:166.64px;font-size:12px;color:#ffffff;transform:scaleX(0.8308);transform-origin:left center;">EXPORT EXCEL</span>
<div style="left:1129px;top:203px;width:790px;height:1px;background:#e3e3e3;"></div>
<div style="left:1129px;top:203px;width:1px;height:829px;background:#e3e3e3;"></div>
<div style="left:1129px;top:234px;width:790px;height:1px;background:#dcdcdc;"></div>
<span class="t" style="left:1135.00px;top:209.84px;font-size:12px;color:#2a2a2a;transform:scaleX(0.9858);transform-origin:left center;">Date</span>
<span class="t" style="left:1398.50px;top:209.84px;font-size:12px;color:#2a2a2a;transform:scaleX(0.9500);transform-origin:left center;">Total Sales</span>
<span class="t" style="left:1662.40px;top:209.84px;font-size:12px;color:#2a2a2a;transform:scaleX(0.9404);transform-origin:left center;">Orders</span>
<div style="left:1130px;top:235px;width:789px;height:28px;background:#e9f2f6;"></div>
<span class="t" style="left:1135.00px;top:239.64px;font-size:12px;color:#2a2a2a;transform:scaleX(0.9501);transform-origin:left center;">07/01/2023  -  07/18/2023</span>
<span class="t" style="left:1398.50px;top:239.64px;font-size:12px;color:#1a6aa2;transform:scaleX(0.8900);transform-origin:left center;">$2,623.84</span>
<span class="t" style="left:1662.40px;top:239.64px;font-size:12px;color:#2a2a2a;transform:scaleX(0.9500);transform-origin:left center;">50</span>
<span class="t" style="left:1135.00px;top:267.64px;font-size:12px;color:#2a2a2a;transform:scaleX(0.9501);transform-origin:left center;">06/01/2023  -  06/18/2023</span>
<span class="t" style="left:1398.50px;top:267.64px;font-size:12px;color:#1a6aa2;transform:scaleX(0.8900);transform-origin:left center;">$-5,768.74</span>
<span class="t" style="left:1662.40px;top:267.64px;font-size:12px;color:#2a2a2a;transform:scaleX(0.9500);transform-origin:left center;">79</span>
<div style="left:1130px;top:291px;width:789px;height:28px;background:#e9f2f6;"></div>
<span class="t" style="left:1135.00px;top:295.64px;font-size:12px;color:#2a2a2a;transform:scaleX(0.9501);transform-origin:left center;">05/01/2023  -  05/18/2023</span>
<span class="t" style="left:1398.50px;top:295.64px;font-size:12px;color:#1a6aa2;transform:scaleX(0.8900);transform-origin:left center;">$3,005,344.98</span>
<span class="t" style="left:1662.40px;top:295.64px;font-size:12px;color:#2a2a2a;transform:scaleX(0.9500);transform-origin:left center;">135</span>
<span class="t" style="left:1135.00px;top:323.64px;font-size:12px;color:#2a2a2a;transform:scaleX(0.9501);transform-origin:left center;">04/01/2023  -  04/18/2023</span>
<span class="t" style="left:1398.50px;top:323.64px;font-size:12px;color:#1a6aa2;transform:scaleX(0.8900);transform-origin:left center;">$15,414.00</span>
<span class="t" style="left:1662.40px;top:323.64px;font-size:12px;color:#2a2a2a;transform:scaleX(0.9500);transform-origin:left center;">51</span>
<div style="left:1130px;top:347px;width:789px;height:28px;background:#e9f2f6;"></div>
<span class="t" style="left:1135.00px;top:351.64px;font-size:12px;color:#2a2a2a;transform:scaleX(0.9501);transform-origin:left center;">03/01/2023  -  03/18/2023</span>
<span class="t" style="left:1398.50px;top:351.64px;font-size:12px;color:#1a6aa2;transform:scaleX(0.8900);transform-origin:left center;">$3,618.84</span>
<span class="t" style="left:1662.40px;top:351.64px;font-size:12px;color:#2a2a2a;transform:scaleX(0.9500);transform-origin:left center;">134</span>
<span class="t" style="left:1135.00px;top:379.64px;font-size:12px;color:#2a2a2a;transform:scaleX(0.9501);transform-origin:left center;">02/01/2023  -  02/18/2023</span>
<span class="t" style="left:1398.50px;top:379.64px;font-size:12px;color:#1a6aa2;transform:scaleX(0.8900);transform-origin:left center;">$1,169,395.08</span>
<span class="t" style="left:1662.40px;top:379.64px;font-size:12px;color:#2a2a2a;transform:scaleX(0.9500);transform-origin:left center;">172</span>
<div style="left:1130px;top:403px;width:789px;height:28px;background:#e9f2f6;"></div>
<span class="t" style="left:1135.00px;top:407.64px;font-size:12px;color:#2a2a2a;transform:scaleX(0.9501);transform-origin:left center;">01/01/2023  -  01/18/2023</span>
<span class="t" style="left:1398.50px;top:407.64px;font-size:12px;color:#1a6aa2;transform:scaleX(0.8900);transform-origin:left center;">$14,073.51</span>
<span class="t" style="left:1662.40px;top:407.64px;font-size:12px;color:#2a2a2a;transform:scaleX(0.9500);transform-origin:left center;">101</span>
<span class="t" style="left:1135.00px;top:435.64px;font-size:12px;color:#2a2a2a;transform:scaleX(0.9501);transform-origin:left center;">12/01/2022  -  12/18/2022</span>
<span class="t" style="left:1398.50px;top:435.64px;font-size:12px;color:#1a6aa2;transform:scaleX(0.8900);transform-origin:left center;">$29,604.14</span>
<span class="t" style="left:1662.40px;top:435.64px;font-size:12px;color:#2a2a2a;transform:scaleX(0.9500);transform-origin:left center;">71</span>
<div style="left:1130px;top:459px;width:789px;height:28px;background:#e9f2f6;"></div>
<span class="t" style="left:1135.00px;top:463.64px;font-size:12px;color:#2a2a2a;transform:scaleX(0.9626);transform-origin:left center;">11/01/2022  -  11/18/2022</span>
<span class="t" style="left:1398.50px;top:463.64px;font-size:12px;color:#1a6aa2;transform:scaleX(0.8900);transform-origin:left center;">$167,228.01</span>
<span class="t" style="left:1662.40px;top:463.64px;font-size:12px;color:#2a2a2a;transform:scaleX(0.9500);transform-origin:left center;">68</span>
<span class="t" style="left:1135.00px;top:491.64px;font-size:12px;color:#2a2a2a;transform:scaleX(0.9501);transform-origin:left center;">10/01/2022  -  10/18/2022</span>
<span class="t" style="left:1398.50px;top:491.64px;font-size:12px;color:#1a6aa2;transform:scaleX(0.8900);transform-origin:left center;">$5,373.25</span>
<span class="t" style="left:1662.40px;top:491.64px;font-size:12px;color:#2a2a2a;transform:scaleX(0.9500);transform-origin:left center;">25</span>
<div style="left:1130px;top:515px;width:789px;height:28px;background:#e9f2f6;"></div>
<span class="t" style="left:1135.00px;top:519.64px;font-size:12px;color:#2a2a2a;transform:scaleX(0.9501);transform-origin:left center;">09/01/2022  -  09/18/2022</span>
<span class="t" style="left:1398.50px;top:519.64px;font-size:12px;color:#1a6aa2;transform:scaleX(0.8900);transform-origin:left center;">$18,622.90</span>
<span class="t" style="left:1662.40px;top:519.64px;font-size:12px;color:#2a2a2a;transform:scaleX(0.9500);transform-origin:left center;">58</span>
<span class="t" style="left:1135.00px;top:547.64px;font-size:12px;color:#2a2a2a;transform:scaleX(0.9501);transform-origin:left center;">08/01/2022  -  08/18/2022</span>
<span class="t" style="left:1398.50px;top:547.64px;font-size:12px;color:#1a6aa2;transform:scaleX(0.8900);transform-origin:left center;">$2,330.00</span>
<span class="t" style="left:1662.40px;top:547.64px;font-size:12px;color:#2a2a2a;transform:scaleX(0.9500);transform-origin:left center;">10</span>
<div style="left:1392px;top:203px;width:1px;height:368px;background:#e6e6e6;"></div>
<div style="left:1656px;top:203px;width:1px;height:368px;background:#e6e6e6;"></div>
<div style="left:1213px;top:190px;width:337px;height:52px;background:#ffffff;box-sizing:border-box;border:1px solid #a7b4bd;box-shadow:1px 1px 2px rgba(0,0,0,0.08);"></div>
<div style="left:1218px;top:197px;width:328px;height:19px;background:#cce6f6;box-sizing:border-box;border:1px solid #3d9ad8;"></div>
<div style="left:1220px;top:199px;width:324px;height:15px;background:transparent;box-sizing:border-box;border:1px dotted #111;"></div>
<span class="t" style="left:1224.30px;top:196.24px;font-size:12px;color:#1a1a1a;transform:scaleX(0.9657);transform-origin:left center;">This Month VS Last Month To Date</span>
<span class="t" style="left:1224.30px;top:215.94px;font-size:12px;color:#1a1a1a;transform:scaleX(0.9717);transform-origin:left center;">This Month VS Last Month</span>
<div style="left:0px;top:1032px;width:1919px;height:1px;background:#c0c0c0;"></div>
<svg style="left:0;top:0" width="1919" height="1033" viewBox="0 0 1919 1033"><line x1="1538" y1="61.5" x2="1580" y2="147" stroke="#ff0000" stroke-width="3" stroke-linecap="round"/><path d="M1575 149.6 L1584 145 L1585.5 160 Z" fill="#ff0000" stroke="#ff0000" stroke-width="1.5" stroke-linejoin="round"/></svg>
<svg style="left:0;top:0" width="1919" height="1033" viewBox="0 0 1919 1033"><circle cx="27" cy="17" r="9" fill="#f4f4f4"/><path d="M26.5 9.6 A7.4 7.4 0 0 0 26.5 24.4 Z" fill="#1462a8"/><rect x="24.4" y="13.9" width="2.1000000000000014" height="1.4" fill="#c8dcf0"/><rect x="26.5" y="13.9" width="3.3000000000000007" height="1.4" fill="#3c80c2"/><rect x="23" y="15.9" width="3.5" height="2.1" fill="#c8dcf0"/><rect x="26.5" y="15.9" width="4.699999999999999" height="2.1" fill="#3c80c2"/><rect x="24.4" y="18.6" width="2.1000000000000014" height="1.4" fill="#c8dcf0"/><rect x="26.5" y="18.6" width="3.3000000000000007" height="1.4" fill="#3c80c2"/><rect x="1777.3" y="16" width="10.2" height="2" fill="#c4c4c4"/><rect x="1833" y="14.6" width="7" height="7" fill="none" stroke="#f0f0f0" stroke-width="1.2"/><path d="M1835 12.4 H1842.2 V19.6" fill="none" stroke="#d0d0d0" stroke-width="1.2"/><path d="M1887.7 12.2 L1897.2 21.8 M1897.2 12.2 L1887.7 21.8" stroke="#f0f0f0" stroke-width="1.2"/><path d="M401.3 69.6 L410.6 78.7 M410.6 69.6 L401.3 78.7" stroke="#f5f5f5" stroke-width="1.4"/><rect x="1821" y="95" width="18.3" height="2.2" fill="#fff"/><rect x="1824" y="100" width="12.3" height="2.2" fill="#fff"/><rect x="1828" y="105" width="4.4" height="2.2" fill="#fff"/><path d="M1855 101.5 A7.1 7.1 0 0 1 1865.6 95" fill="none" stroke="#fff" stroke-width="2"/><path d="M1869 100.5 A7.1 7.1 0 0 1 1858.4 107.3" fill="none" stroke="#fff" stroke-width="2"/><path d="M1851 101.2 H1859 L1855 105.2 Z M1865 101 H1873 L1869 97 Z" fill="#fff"/><circle cx="1895.8" cy="101" r="10" fill="#fff"/><path d="M1892 97.2 L1899.6 104.8 M1899.6 97.2 L1892 104.8" stroke="#3a3a3a" stroke-width="1.4"/><path d="M2.9 546.4 L7.7 541.8 V551.3 Z" fill="#ffffff"/><rect x="19.4" y="69.4" width="18.2" height="14.2" fill="#9e9e9e"/><rect x="21.6" y="71.6" width="13.9" height="3.8" fill="#434343"/><rect x="21.6" y="77.8" width="4" height="3.6" fill="#434343"/><rect x="27.2" y="77.8" width="3.2" height="3.6" fill="#434343"/><rect x="31.9" y="77.8" width="3.6" height="3.6" fill="#434343"/><circle cx="25.8" cy="104.1" r="5.2" fill="none" stroke="#9e9e9e" stroke-width="1.7"/><path d="M29.6 108 L36.6 114.8" stroke="#9e9e9e" stroke-width="1.9"/><circle cx="28.4" cy="136.4" r="8.8" fill="#9e9e9e"/><path d="M23.2 136.6 L26.7 140.3 L33.5 132.8" fill="none" stroke="#434343" stroke-width="1.8"/><path d="M22 160.4 Q22 159.4 23 159.4 H27.8 L29.8 161.4 H37 Q38 161.4 38 162.4 V170.5 Q38 171.5 37 171.5 H23 Q22 171.5 22 170.5 Z" fill="#9e9e9e"/><path d="M19.4 162.6 V173.4 H35.2 V172 H20.8 V162.6 Z" fill="#9e9e9e"/><circle cx="29.5" cy="198.1" r="9.2" fill="#9e9e9e"/><path d="M32.2 195.2 Q31.4 193.7 29.5 193.7 Q27 193.7 27 195.8 Q27 197.5 29.5 198 Q32.2 198.6 32.2 200.6 Q32.2 202.5 29.5 202.5 Q27.6 202.5 26.8 201 M29.5 192.2 V193.8 M29.5 202.4 V204" fill="none" stroke="#434343" stroke-width="1.5"/><rect x="20.2" y="222.2" width="18.3" height="17.8" rx="1.6" fill="#9e9e9e"/><circle cx="29.4" cy="228.4" r="2.7" fill="#434343"/><path d="M23.8 237.2 Q23.8 232.8 29.4 232.8 Q35 232.8 35 237.2 Z" fill="#434343"/><rect x="20.5" y="254.9" width="18" height="18.1" rx="1.8" fill="#9e9e9e"/><path d="M23.3 260.6 Q23.3 257.9 25.8 257.9 H29.4 M34 257.3 Q35.6 257.9 35.6 260.4 V263.4 M35.7 267.4 Q35.7 270.1 33.2 270.1 H29.6 M25 270.7 Q23.3 270.1 23.3 267.6 V264.6" fill="none" stroke="#434343" stroke-width="1.7"/><path d="M29 255.8 L31.3 257.9 L29 260 Z M33.5 263 L35.6 265.3 L37.7 263 Z M30 268 L27.7 270.1 L30 272.2 Z M21.2 265 L23.3 262.7 L25.4 265 Z" fill="#434343"/><path transform="translate(16.94 284.7) scale(1.02)" d="M20 4H4v2h16V4zm1 10v-2l-1-5H4l-1 5v2h1v6h10v-6h4v6h2v-6h1zm-9 4H6v-4h6v4z" fill="#9e9e9e"/><path d="M29.65 590.6 L38.8 595.2 V597.6 H20.5 V595.2 Z" fill="#9e9e9e"/><rect x="22.6" y="599.2" width="1.7" height="6.2" fill="#9e9e9e"/><rect x="28.2" y="599.2" width="1.7" height="6.2" fill="#9e9e9e"/><rect x="33.8" y="599.2" width="1.7" height="6.2" fill="#9e9e9e"/><rect x="20.5" y="607" width="18.3" height="2" fill="#9e9e9e"/><rect x="21" y="626.3" width="17" height="15.7" rx="1.6" fill="#9e9e9e"/><rect x="27.3" y="624" width="4.4" height="3.6" rx="1" fill="#9e9e9e"/><circle cx="29.5" cy="626.2" r="0.7" fill="#434343"/><path d="M27.4 631.4 Q27.4 629.3 29.5 629.3 Q31.6 629.3 31.6 631.2 Q31.6 632.5 29.5 633.5 V635" fill="none" stroke="#434343" stroke-width="1.3"/><circle cx="29.5" cy="637.5" r="0.8" fill="#434343"/><rect x="21" y="659.2" width="17" height="15.8" rx="1.6" fill="#9e9e9e"/><rect x="27.3" y="657.2" width="4.4" height="3.6" rx="1" fill="#9e9e9e"/><circle cx="29.5" cy="659.3" r="0.7" fill="#434343"/><rect x="25" y="662" width="9" height="1.5" fill="#434343"/><rect x="25" y="665.8" width="9" height="1.5" fill="#434343"/><rect x="25" y="669.6" width="5.4" height="1.5" fill="#434343"/><path d="M20 691 Q20 689.9 21.1 689.9 H27.4 L38.3 700.8 Q38.9 701.5 38.3 702.2 L32.6 707.9 Q31.9 708.5 31.2 707.9 L20.4 697.2 Q20 696.8 20 696.2 Z" fill="#9e9e9e"/><circle cx="23.4" cy="693.3" r="1.3" fill="#434343"/><path transform="translate(17.86 719.96) scale(0.97)" d="M19.14 12.94c.04-.3.06-.61.06-.94 0-.32-.02-.64-.07-.94l2.03-1.58c.18-.14.23-.41.12-.61l-1.92-3.32c-.12-.22-.37-.29-.59-.22l-2.39.96c-.5-.38-1.03-.7-1.62-.94l-.36-2.54c-.04-.24-.24-.41-.48-.41h-3.84c-.24 0-.43.17-.47.41l-.36 2.54c-.59.24-1.13.57-1.62.94l-2.39-.96c-.22-.08-.47 0-.59.22L2.74 8.87c-.12.21-.08.47.12.61l2.03 1.58c-.05.3-.09.63-.09.94s.02.64.07.94l-2.03 1.58c-.18.14-.23.41-.12.61l1.92 3.32c.12.22.37.29.59.22l2.39-.96c.5.38 1.03.7 1.62.94l.36 2.54c.05.24.24.41.48.41h3.84c.24 0 .44-.17.47-.41l.36-2.54c.59-.24 1.130-.56 1.62-.94l2.39.96c.22.08.47 0 .59-.22l1.92-3.32c.12-.22.07-.47-.12-.61l-2.010-1.58zM12 15.6c-1.98 0-3.6-1.62-3.6-3.6s1.62-3.6 3.6-3.6 3.6 1.620 3.6 3.6-1.62 3.6-3.6 3.6z" fill="#9e9e9e"/><circle cx="29" cy="763.4" r="8" fill="none" stroke="#9e9e9e" stroke-width="1.6"/><ellipse cx="29" cy="763.4" rx="3.3" ry="8" fill="none" stroke="#9e9e9e" stroke-width="1.5"/><path d="M21.5 760.6 H36.5 M21.5 766.2 H36.5" stroke="#9e9e9e" stroke-width="1.5"/><path transform="translate(18.23 782.43) scale(0.885)" d="M21 6h-2v9H6v2c0 .55.45 1 1 1h11l4 4V7c0-.55-.45-1-1-1zm-4 6V3c0-.55-.45-1-1-1H3c-.55 0-1 .45-1 1v14l4-4h10c.55 0 1-.45 1-1z" fill="#9e9e9e"/><rect x="20.9" y="816" width="16" height="11" rx="1.2" fill="none" stroke="#9e9e9e" stroke-width="1.6"/><rect x="27.6" y="827" width="2.8" height="2.6" fill="#9e9e9e"/><rect x="25.3" y="829.4" width="7.4" height="2.3" fill="#9e9e9e"/><path d="M26 820.2 L28 821.8 L26 823.4 M31.8 818.6 L29.8 820.2 L31.8 821.8" fill="none" stroke="#9e9e9e" stroke-width="1.2"/><path d="M254 196.0 L257.8 200.0 L261.6 196.0" fill="none" stroke="#6f6f6f" stroke-width="1.9"/><path d="M254 229.10000000000002 L257.8 233.10000000000002 L261.6 229.10000000000002" fill="none" stroke="#6f6f6f" stroke-width="1.9"/><path d="M254 262.0 L257.8 266.0 L261.6 262.0" fill="none" stroke="#6f6f6f" stroke-width="1.9"/><path d="M254 597.4 L257.8 601.4 L261.6 597.4" fill="none" stroke="#6f6f6f" stroke-width="1.9"/><path d="M254 630.8 L257.8 634.8 L261.6 630.8" fill="none" stroke="#6f6f6f" stroke-width="1.9"/><path d="M254 664.0999999999999 L257.8 668.0999999999999 L261.6 664.0999999999999" fill="none" stroke="#6f6f6f" stroke-width="1.9"/><path d="M254 696.8 L257.8 700.8 L261.6 696.8" fill="none" stroke="#6f6f6f" stroke-width="1.9"/><path d="M254 730.0 L257.8 734.0 L261.6 730.0" fill="none" stroke="#6f6f6f" stroke-width="1.9"/><path d="M254 298.7 L257.8 294.7 L261.6 298.7" fill="none" stroke="#6f6f6f" stroke-width="1.9"/><circle cx="29.9" cy="984.8" r="4.3" fill="#9a9a9a"/><path d="M20.5 997.8 V995.2 Q20.5 990.4 29.9 990.4 Q39.2 990.4 39.2 995.2 V997.8 Z" fill="#9a9a9a"/><path d="M212.6 988.5 V985.6 Q212.6 982.2 216.1 982.2 Q219.6 982.2 219.6 985.6 V988.5" fill="none" stroke="#fff" stroke-width="2.8"/><rect x="209.2" y="987.9" width="13.8" height="9.3" rx="1.6" fill="#fff"/><circle cx="216.1" cy="991.4" r="1.1" fill="#333"/><rect x="215.6" y="991.5" width="1" height="2.6" fill="#555"/><path d="M241.3 982.4 H235.6 V995.6 H241.3" fill="none" stroke="#fff" stroke-width="2.9" stroke-linejoin="round" stroke-linecap="round"/><path d="M240.2 989 H248.6 M245 984.6 L249.3 989 L245 993.4" fill="none" stroke="#fff" stroke-width="2.6" stroke-linecap="round" stroke-linejoin="round"/></svg>
</body></html>
